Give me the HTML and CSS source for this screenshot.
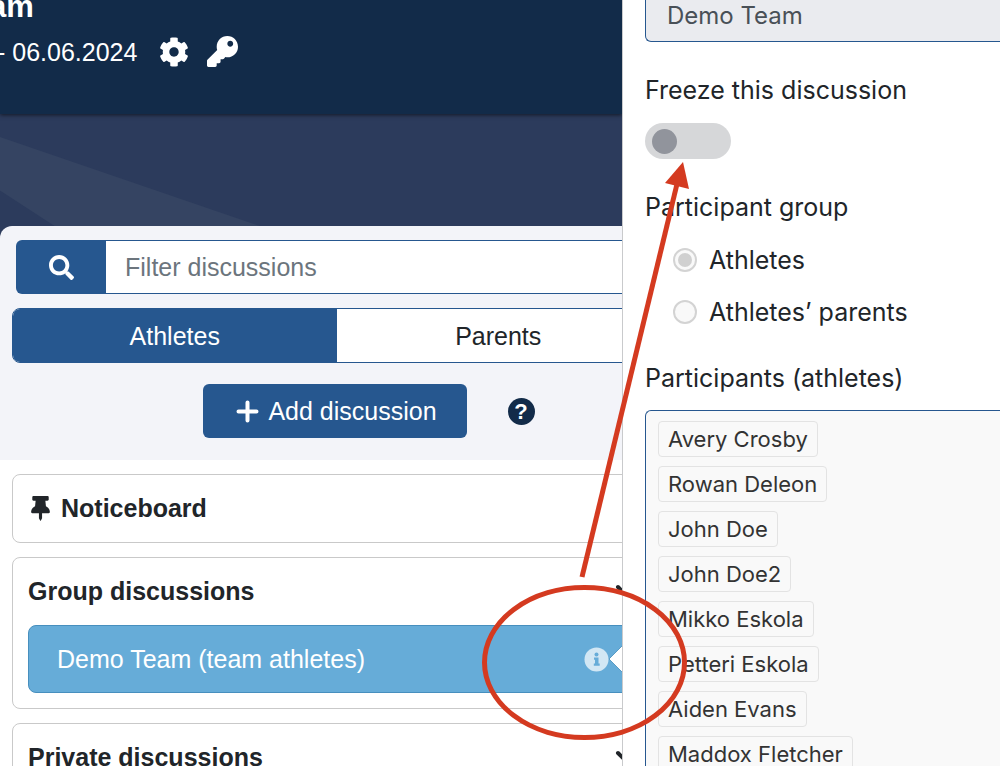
FILE: index.html
```
<!DOCTYPE html>
<html lang="en">
<head>
    <meta charset="utf-8">
    <title>Discussions</title>
    <link rel="stylesheet" href="styles.css">
</head>
<body>

<div class="page">
    <main class="team">
        <header class="team-header">
            <h1>am</h1>
            <div class="team-dates">
                <span>- 06.06.2024</span>
                <a href="#" aria-label="Settings">
                    <svg width="30" height="30" viewBox="0 0 512 512"><path fill="currentColor" d="M487.400 315.700l-42.600-24.600c4.300-23.200 4.300-47 0-70.200l42.600-24.600c4.900-2.800 7.100-8.600 5.500-14-11.100-35.600-30-67.800-54.700-94.600-3.800-4.100-10-5.100-14.800-2.300L380.800 110c-17.900-15.400-38.500-27.300-60.800-35.100V25.800c0-5.600-3.900-10.500-9.400-11.700-36.700-8.200-74.300-7.800-109.200 0-5.500 1.200-9.400 6.100-9.400 11.700V75c-22.200 7.900-42.800 19.800-60.800 35.100L88.700 85.500c-4.900-2.800-11-1.900-14.800 2.300-24.700 26.700-43.600 58.900-54.700 94.600-1.700 5.400.6 11.200 5.500 14L67.300 221c-4.300 23.200-4.300 47 0 70.200l-42.600 24.600c-4.900 2.800-7.100 8.600-5.500 14 11.100 35.600 30 67.800 54.700 94.600 3.800 4.100 10 5.100 14.800 2.300l42.600-24.600c17.900 15.400 38.500 27.300 60.800 35.100v49.200c0 5.600 3.900 10.500 9.400 11.700 36.700 8.200 74.300 7.800 109.200 0 5.500-1.200 9.400-6.100 9.400-11.700v-49.200c22.200-7.900 42.800-19.800 60.800-35.100l42.600 24.600c4.900 2.800 11 1.900 14.800-2.300 24.700-26.700 43.600-58.900 54.700-94.600 1.500-5.500-.7-11.300-5.600-14.100zM256 336c-44.100 0-80-35.900-80-80s35.900-80 80-80 80 35.900 80 80-35.900 80-80 80z"/></svg>
                </a>
                <a href="#" aria-label="Access">
                    <svg width="31" height="31" viewBox="0 0 512 512"><path fill="currentColor" d="M512 176c0 97.200-78.800 176-176 176-11.200 0-22.200-1.100-32.800-3.100l-24 27a24 24 0 0 1-17.900 8.100H224v40c0 13.300-10.700 24-24 24h-40v40c0 13.300-10.700 24-24 24H24c-13.300 0-24-10.700-24-24v-78.100c0-6.400 2.500-12.500 7-17l161.800-161.800A176 176 0 0 1 160 176C160 78.800 238.800 0 336 0s176 78.500 176 176zM336 128c0 26.500 21.500 48 48 48s48-21.500 48-48-21.500-48-48-48-48 21.500-48 48z"/></svg>
                </a>
            </div>
        </header>

        <div class="banner">
            <div class="toolbar">
                <form class="search">
                    <button type="button" aria-label="Search">
                        <svg width="25" height="25" viewBox="0 0 512 512"><path fill="currentColor" d="M505 442.700L405.300 343c-4.500-4.500-10.600-7-17-7H372c27.600-35.300 44-79.700 44-128C416 93.100 322.900 0 208 0S0 93.100 0 208s93.100 208 208 208c48.300 0 92.700-16.400 128-44v16.300c0 6.400 2.500 12.500 7 17l99.700 99.700c9.400 9.400 24.600 9.400 33.900 0l28.300-28.300c9.400-9.400 9.400-24.600.1-34zM208 336c-70.700 0-128-57.200-128-128 0-70.700 57.200-128 128-128 70.700 0 128 57.200 128 128 0 70.700-57.200 128-128 128z"/></svg>
                    </button>
                    <input type="text" placeholder="Filter discussions" aria-label="Filter discussions">
                </form>
                <div class="tabs">
                    <button type="button" class="active">Athletes</button>
                    <button type="button">Parents</button>
                </div>
                <div class="actions">
                    <button type="button" class="add">
                        <svg width="23" height="23" viewBox="0 0 23 23"><path fill="none" stroke="currentColor" stroke-width="4" stroke-linecap="round" d="M11.500 2.500v18M2.500 11.500h18"/></svg>
                        Add discussion
                    </button>
                    <button type="button" class="help">?</button>
                </div>
            </div>
        </div>

        <div class="lists">
            <section class="card">
                <h2>
                    <svg width="25" height="25" viewBox="-64 0 512 512"><path fill="currentColor" d="M336 0H48C34.700 0 24 10.700 24 24v48c0 13.300 10.700 24 24 24h44.400l-11.600 114.800C34.900 236.100 0 276.900 0 328c0 13.300 10.700 24 24 24h136v104l24 48c3.300 6.600 12.700 6.600 16 0l24-48V352h136c13.300 0 24-10.700 24-24 0-51.600-35.200-92.100-80.700-117.200L291.600 96H336c13.300 0 24-10.700 24-24V24c0-13.300-10.700-24-24-24z"/></svg>
                    Noticeboard
                </h2>
            </section>
            <section class="card">
                <h2>
                    Group discussions
                    <svg class="chevron" width="22" height="14" viewBox="0 0 22 14"><path fill="none" stroke="currentColor" stroke-width="4" stroke-linecap="round" d="M3 3l8 8 8-8"/></svg>
                </h2>
                <a href="#" class="discussion">
                    Demo Team (team athletes)
                    <span class="info">
                        <svg width="25" height="25" viewBox="0 0 25 25"><circle cx="12.500" cy="12.500" r="12" fill="#d2e7f4"/><circle cx="12.500" cy="7.500" r="2" fill="#66acd8"/><path fill="#66acd8" d="M10 10.500h4.500v6h1.200v2.300H9.800v-2.300H11v-3.700h-1z"/></svg>
                        <svg width="14" height="28" viewBox="0 0 14 28"><path fill="#fff" d="M14 0v28L0 14z"/><path fill="none" stroke="#5a9cc5" d="M14 0L0 14l14 14"/></svg>
                    </span>
                </a>
            </section>
            <section class="card">
                <h2>
                    Private discussions
                    <svg class="chevron" width="22" height="14" viewBox="0 0 22 14"><path fill="none" stroke="currentColor" stroke-width="4" stroke-linecap="round" d="M3 3l8 8 8-8"/></svg>
                </h2>
            </section>
        </div>
    </main>

    <aside class="details">
        <input type="text" class="name" value="Demo Team" aria-label="Discussion name" disabled>

        <label class="title" for="freeze">Freeze this discussion</label>
        <input type="checkbox" class="switch" id="freeze" disabled>

        <fieldset>
            <legend class="title">Participant group</legend>
            <label class="radio"><input type="radio" name="group" checked disabled> Athletes</label>
            <label class="radio"><input type="radio" name="group" disabled> Athletes’ parents</label>
        </fieldset>

        <h3 class="title">Participants (athletes)</h3>
        <ul class="participants">
            <li>Avery Crosby</li>
            <li>Rowan Deleon</li>
            <li>John Doe</li>
            <li>John Doe2</li>
            <li>Mikko Eskola</li>
            <li>Petteri Eskola</li>
            <li>Aiden Evans</li>
            <li>Maddox Fletcher</li>
        </ul>
    </aside>

    <!-- arrow from the info icon to the freeze switch -->
    <svg class="pointer" width="220" height="590" viewBox="475 155 220 590">
        <g fill="none" stroke="#d43a20" stroke-width="5">
            <path d="M582 577L677 184"/>
            <ellipse cx="584.500" cy="662.500" rx="100" ry="75"/>
        </g>
        <path fill="#d43a20" d="M683 162l-18 21 24 6z"/>
    </svg>
</div>

</body>
</html>
```
FILE: styles.css
```
* {
    box-sizing: border-box;
}
body {
    margin: 0;
    color: #212529;
    font-family: "Liberation Sans", Arial, sans-serif;
    font-size: 25px;
    line-height: 30px;
}
h1, h2, h3, ul, fieldset, legend {
    margin: 0;
    padding: 0;
}
button, input {
    font: inherit;
    color: inherit;
    margin: 0;
}
svg {
    flex: none;
}
.page {
    position: relative;
    display: grid;
    grid-template-columns: 1fr 378px;
    height: 100vh;
    overflow: hidden;
}

/* team page, its right part runs under the details panel */
.team {
    min-width: 0;
    overflow: hidden;
}
.team-header {
    display: flow-root;
    position: relative;
    z-index: 1;
    height: 114px;
    color: #fff;
    background-color: #122b49;
    box-shadow: 0 1px 4px rgba(0, 0, 0, 0.6);
}
.team-header h1 {
    margin-top: -9px;
    margin-left: -11px;
    font-size: 31px;
    line-height: 32px;
    padding-bottom: 3px;
}
.team-dates {
    display: flex;
    align-items: center;
    gap: 18px;
    margin-left: -3px;
    padding-top: 10px;
}
.team-dates a {
    display: flex;
    color: #fff;
}
.team-dates span {
    margin-right: 4px;
}
.banner {
    position: relative;
    padding-top: 112px;
    background-color: #2c3b5c;
}
.banner::before {
    content: "";
    position: absolute;
    top: 23px;
    left: 0;
    width: 260px;
    height: 89px;
    background-color: #354462;
    clip-path: polygon(0 0, 100% 100%, 21% 100%, 0 60%);
}
.toolbar {
    position: relative;
    margin-right: -51px;
    padding: 14px 12px 22px;
    border-radius: 12px 12px 0 0;
    background-color: #f3f4f9;
}
.search {
    display: flex;
    height: 54px;
    margin: 0 4px 14px;
}
.search button {
    display: flex;
    align-items: center;
    justify-content: center;
    width: 90px;
    border: 0;
    border-radius: 6px 0 0 6px;
    color: #fff;
    background-color: #26578f;
}
.search input {
    flex: 1;
    min-width: 0;
    padding: 0 19px;
    border: 1px solid #26578f;
    border-left: 0;
    border-radius: 0 6px 6px 0;
    background-color: #fff;
}
.search input::placeholder {
    color: #6c757d;
    opacity: 1;
}
.tabs {
    display: flex;
    height: 55px;
    border: 1px solid #26578f;
    border-radius: 8px;
    background-color: #fff;
    overflow: hidden;
}
.tabs button {
    flex: 1;
    border: 0;
    background-color: transparent;
}
.tabs .active {
    color: #fff;
    background-color: #26578f;
}
.actions {
    display: flex;
    align-items: center;
    justify-content: center;
    gap: 41px;
    margin-top: 21px;
    padding-left: 65px;
}
.add {
    display: flex;
    align-items: center;
    gap: 9px;
    height: 54px;
    padding: 0 30px 0 33px;
    border: 0;
    border-radius: 6px;
    color: #fff;
    background-color: #26578f;
}
.help {
    width: 27px;
    height: 27px;
    padding: 0;
    border: 0;
    border-radius: 50%;
    color: #fff;
    background-color: #122b49;
    font-size: 22px;
    font-weight: bold;
    line-height: 27px;
}
.lists {
    display: grid;
    gap: 14px;
    margin-right: -51px;
    padding: 14px 12px;
}
.card {
    padding: 18px 15px 15px;
    border: 1px solid #c9c9c9;
    border-radius: 8px;
}
.card h2 {
    display: flex;
    align-items: center;
    gap: 8px;
    padding-bottom: 4px;
    font-size: 25px;
    line-height: 30px;
}
.chevron {
    margin-left: auto;
    margin-right: 8px;
}
.discussion {
    display: flex;
    align-items: center;
    height: 68px;
    margin-top: 15px;
    padding: 0 21px 0 28px;
    border: 1px solid #478fbe;
    border-radius: 8px;
    color: #fff;
    background-color: #66acd8;
    text-decoration: none;
}
.info {
    display: flex;
    align-items: center;
    margin-left: auto;
}

/* details panel */
.details {
    padding-left: 22px;
    border-left: 1px solid #c9cacc;
    background-color: #fff;
    font-family: Inter, sans-serif;
    font-size: 25px;
    overflow: hidden;
}
.name {
    display: block;
    width: 100%;
    height: 54px;
    margin-top: -12px;
    padding: 0 21px;
    border: 1px solid #26578f;
    border-right: 0;
    border-radius: 6px 0 0 6px;
    color: #495057;
    background-color: #eaebef;
    font-size: 24px;
}
.title {
    display: block;
    font-size: 25px;
    font-weight: normal;
    line-height: 30px;
}
label.title {
    margin: 33px 0 18px;
}
.switch {
    display: flex;
    align-items: center;
    appearance: none;
    width: 86px;
    height: 36px;
    padding: 0 7px;
    border-radius: 18px;
    background-color: #d6d7d9;
}
.switch::before {
    content: "";
    width: 25px;
    height: 25px;
    border-radius: 50%;
    background-color: #91949c;
}
fieldset {
    margin: 33px 0 36px;
    border: 0;
}
.radio {
    display: flex;
    align-items: center;
    gap: 12px;
    padding: 11px 0 11px 28px;
}
legend + .radio {
    margin-top: 12px;
}
.radio:last-child {
    padding-bottom: 0;
}
.radio input {
    display: grid;
    place-content: center;
    appearance: none;
    width: 24px;
    height: 24px;
    border: 2px solid #d3d3d3;
    border-radius: 50%;
    background-color: #f9f9f9;
}
.radio input:checked::before {
    content: "";
    width: 14px;
    height: 14px;
    border-radius: 50%;
    background-color: #d0d0d0;
}
.participants {
    display: flex;
    flex-direction: column;
    align-items: flex-start;
    gap: 9px;
    margin-top: 17px;
    padding: 10px 12px;
    border: 1px solid #26578f;
    border-right: 0;
    border-radius: 6px 0 0 0;
    background-color: #f9f9f9;
    color: #333;
    font-size: 22px;
    list-style: none;
}
.participants li {
    height: 36px;
    padding: 0 9px;
    border: 1px solid #e3e3e3;
    border-radius: 4px;
    line-height: 34px;
}

.pointer {
    position: absolute;
    top: 155px;
    left: 475px;
    pointer-events: none;
}
```
